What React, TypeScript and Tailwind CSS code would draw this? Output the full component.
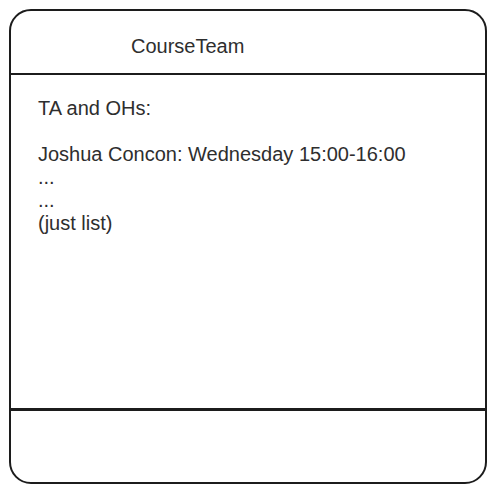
import React from 'react';

const App: React.FC = () => {
  return (
    <div className="w-[497px] h-[493px] bg-white p-[9px] pr-[10px]" style={{ fontFamily: '"Liberation Sans", Arial, sans-serif' }}>
      <div className="h-[475px] border-2 border-[#1c1c1c] rounded-[22px] flex flex-col text-[#2e2e2e] text-[20px] leading-[23px]">
        <div className="h-[64px] pl-[120px] pt-[24px] border-b-2 border-[#1c1c1c]">
          CourseTeam
        </div>
        <div className="h-[336px] pl-[27px] pt-[22px] border-b-[3px] border-[#1c1c1c]">
          <p>TA and OHs:</p>
          <p>&nbsp;</p>
          <p>Joshua Concon: Wednesday 15:00-16:00</p>
          <p>...</p>
          <p>...</p>
          <p>(just list)</p>
        </div>
        <div className="flex-1" />
      </div>
    </div>
  );
};

export default App;
